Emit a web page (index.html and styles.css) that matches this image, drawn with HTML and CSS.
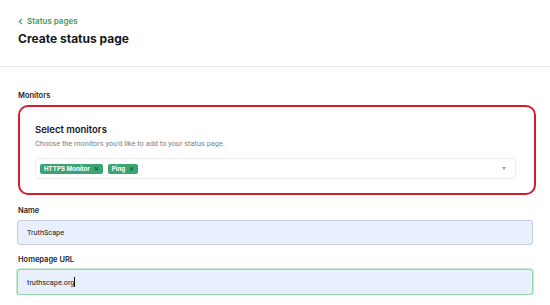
FILE: index.html
```html
<!DOCTYPE html>
<html lang="en">
<head>
  <meta charset="UTF-8" />
  <title>Create status page</title>
  <link rel="stylesheet" href="styles.css">
</head>
<body>
  <div class="page-head">
    <a class="back-link" href="#">
      <svg width="5" height="7" viewBox="0 0 5 7"><path d="M4 0.8 L1.2 3.5 L4 6.2" fill="none" stroke="currentColor" stroke-width="1.1"/></svg>
      Status pages
    </a>
    <h1>Create status page</h1>
  </div>

  <div class="form">
    <div class="label monitors-label">Monitors</div>
    <div class="monitor-card">
      <h2>Select monitors</h2>
      <p class="hint">Choose the monitors you'd like to add to your status page.</p>
      <div class="select">
        <span class="tag">HTTPS Monitor <span class="tag-x">×</span></span>
        <span class="tag">Ping <span class="tag-x">×</span></span>
        <span class="select-arrow"></span>
      </div>
    </div>

    <div class="label name-label">Name</div>
    <div class="input">TruthScape</div>

    <div class="label">Homepage URL</div>
    <div class="input input-focus">truthscape.org<span class="caret"></span></div>
  </div>
</body>
</html>
```

FILE: styles.css
```css
body {
  margin: 0;
  background: #fff;
  font-family: 'Roboto', 'Liberation Sans', sans-serif;
  color: #1f2328;
}

.page-head {
  padding: 16px 18px 19px;
  border-bottom: 1px solid #e6e7ea;
}

.back-link {
  display: flex;
  align-items: center;
  gap: 4px;
  font-family: 'Inter', sans-serif;
  font-size: 8px;
  font-weight: 600;
  color: #3d9a5c;
  text-decoration: none;
  line-height: 10px;
}

h1 {
  font-family: 'Inter', sans-serif;
  font-size: 12px;
  font-weight: 700;
  margin: 5px 0 0;
  color: #15181c;
  line-height: 16px;
}

.form {
  padding: 24px 17px 0 17px;
  width: 517px;
}

.label {
  font-family: 'Inter', sans-serif;
  font-size: 7.5px;
  font-weight: 600;
  color: #1f2328;
  line-height: 10px;
  margin: 10px 0 4px 1px;
}

.monitors-label {
  margin-top: 0;
  margin-bottom: 4px;
}

.name-label {
  margin-top: 11px;
}

.monitor-card {
  margin-left: 1px;
  width: 518px;
  box-sizing: border-box;
  border: 2px solid #d11f2f;
  border-radius: 10px;
  padding: 16px 18px 14px 15px;
}

.monitor-card h2 {
  font-family: 'Inter', sans-serif;
  font-size: 9.5px;
  font-weight: 600;
  margin: 0;
  line-height: 14px;
  color: #15181c;
}

.hint {
  font-size: 7.4px;
  color: #7a7f87;
  margin: 2px 0 9px;
  line-height: 10px;
}

.select {
  position: relative;
  display: flex;
  gap: 5px;
  align-items: center;
  height: 21px;
  box-sizing: border-box;
  padding: 0 4px;
  border: 1px solid #ebecef;
  border-radius: 3px;
}

.tag {
  display: flex;
  align-items: center;
  gap: 4px;
  height: 10px;
  padding: 0 4px;
  background: #3ea373;
  color: #fff;
  font-family: 'Inter', sans-serif;
  font-size: 6.2px;
  font-weight: 700;
  border-radius: 2px;
}

.tag-x {
  color: #1d5e3e;
  font-size: 7px;
}

.select-arrow {
  position: absolute;
  right: 9px;
  top: 8px;
  border-left: 2.5px solid transparent;
  border-right: 2.5px solid transparent;
  border-top: 3px solid #9aa0a6;
}

.input {
  height: 25px;
  width: 516px;
  box-sizing: border-box;
  border: 1px solid #c6ccd8;
  border-radius: 3px;
  background: #e8f0fe;
  font-size: 7.3px;
  color: #202124;
  padding: 0 9px;
  display: flex;
  align-items: center;
}

.input-focus {
  height: 26px;
  border-color: #93d6a6;
  box-shadow: 0 0 0 1px #c9edd3;
}

.caret {
  display: inline-block;
  width: 1px;
  height: 10px;
  background: #111;
}
```
